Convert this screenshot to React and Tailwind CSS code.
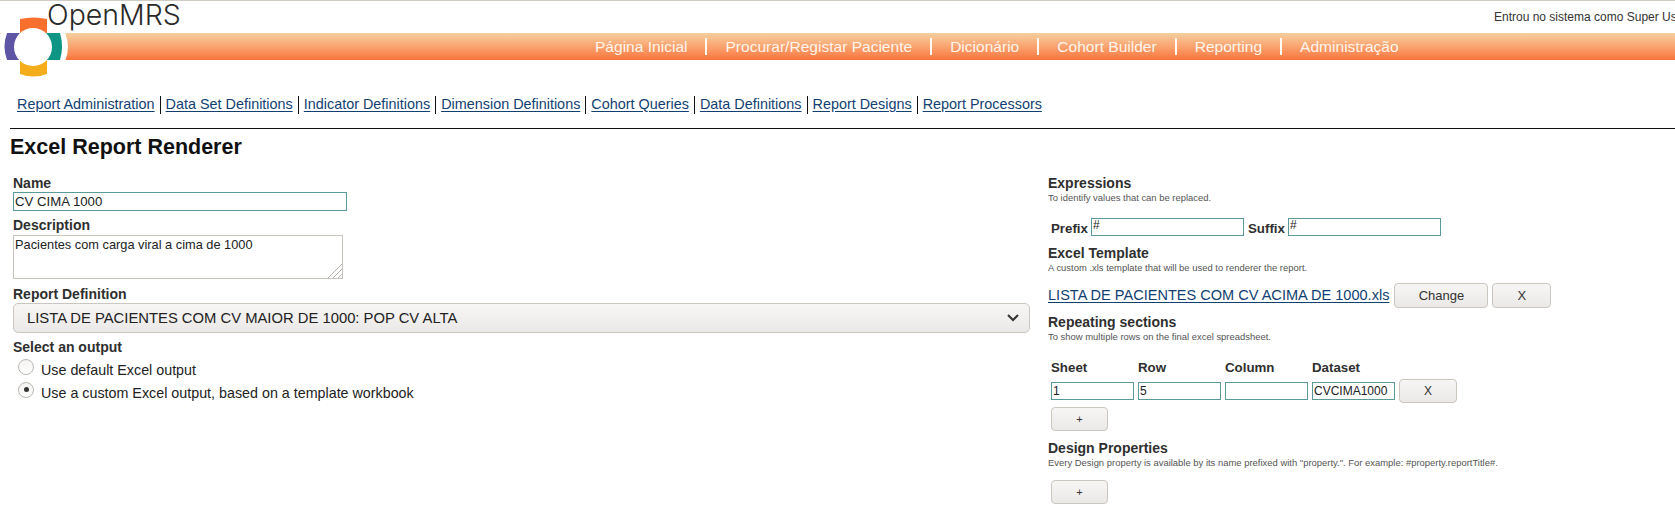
const font = "font-['Liberation_Sans',Arial,sans-serif]";

const menu = ['Página Inicial', 'Procurar/Registar Paciente', 'Dicionário', 'Cohort Builder', 'Reporting', 'Administração'];
const tabs = ['Report Administration', 'Data Set Definitions', 'Indicator Definitions', 'Dimension Definitions', 'Cohort Queries', 'Data Definitions', 'Report Designs', 'Report Processors'];

const btn = 'flex items-center justify-center rounded-[4px] border border-[#cbc6bf] bg-gradient-to-b from-[#f7f6f5] to-[#ebe9e7] text-[#333]';
const field = 'block border border-[#5a9a9a] bg-white px-[1px] text-[#222] outline-none';

const Logo = () => (
    <svg width="70" height="64" viewBox="0 0 70 64" className="absolute left-0 top-[15px]">
        <circle cx="33" cy="31" r="35" fill="#fff" />
        <path d="M20 3 Q33.5 0 47 3 V19 H20 Z" fill="#f96f2d" />
        <path d="M20 44 H47 V58 Q33.5 63 20 58 Z" fill="#f5ad1c" />
        <path d="M7 17 H22 V44 H7 Q2 30.5 7 17 Z" fill="#5f55a5" />
        <path d="M45 17 H60 Q64 30.5 60 44 H45 Z" fill="#0f9584" />
        <circle cx="33" cy="31" r="19" fill="#fff" />
    </svg>
);

const Heading = ({ children }) => <div className="text-[14px] font-bold leading-[16px] text-[#2f2f2f]">{children}</div>;
const SmallHeading = ({ children }) => <div className="text-[13.3px] font-bold leading-[16px] text-[#2f2f2f]">{children}</div>;
const Hint = ({ children }) => <div className="mt-[1px] text-[9.45px] leading-[11px] text-[#555]">{children}</div>;

const Radio = ({ checked, label }) => (
    <div className="flex h-[23px] items-center pl-[5px] text-[14.3px] text-[#222]">
        <span className="mb-[8px] flex h-[16px] w-[16px] items-center justify-center rounded-full border border-[#bdb8b1] bg-gradient-to-b from-[#f4f3f2] to-white">
            {checked && <span className="h-[5px] w-[5px] rounded-full bg-[#333]" />}
        </span>
        <span className="ml-[7px]">{label}</span>
    </div>
);

const App = () => {
    return (
        <div className={`h-[520px] w-[1675px] overflow-hidden bg-white ${font}`}>
            {/* Header */}
            <div className="relative h-[61px] border-t border-[#cfcac3]">
                <div className="mt-[32px] flex h-[27px] items-center bg-gradient-to-b from-[#f5cf9f] to-[#f9733a] pl-[595px] text-[15.55px] text-[#fff5ec]">
                    {menu.map((m, i) => (
                        <div key={m} className="flex items-center">
                            {i > 0 && <span className="mx-[18px] h-[17px] w-[2px] bg-[#fffaf2]" />}
                            <span>{m}</span>
                        </div>
                    ))}
                </div>
                <Logo />
                <div className="absolute left-[47px] top-0 font-['Inter',sans-serif] text-[28.5px] font-light leading-[28px] text-[#2a2a2a]">OpenMRS</div>
                <div className="absolute right-0 top-[9px] w-[181px] overflow-hidden whitespace-nowrap text-[12px] leading-[14px] text-[#333]">Entrou no sistema como Super User</div>
            </div>

            {/* Tabs */}
            <div className="mt-[34px] flex h-[19px] items-center pl-[17px] text-[14.4px] text-[#123f72]">
                {tabs.map((t, i) => (
                    <div key={t} className="flex items-center">
                        {i > 0 && <span className="mx-[5px] h-[18px] w-[1px] bg-[#111]" />}
                        <a className="underline underline-offset-2">{t}</a>
                    </div>
                ))}
            </div>

            <div className="ml-[10px] mt-[14px] border-t border-[#111] pt-[6px]">
                <h1 className="text-[21.5px] font-bold leading-[24px] text-[#111]">Excel Report Renderer</h1>
            </div>

            <div className="mt-[16px] flex">
                {/* Left column */}
                <div className="ml-[13px] w-[1017px] text-[14px]">
                    <Heading>Name</Heading>
                    <input readOnly value="CV CIMA 1000" className={`${field} mt-[1px] h-[19px] w-[334px] text-[13.2px]`} />
                    <div className="mt-[6px]"><Heading>Description</Heading></div>
                    <div className="relative mt-[2px] h-[44px] w-[330px]">
                        <textarea readOnly value="Pacientes com carga viral a cima de 1000" className="block h-[44px] w-[330px] resize-none border border-[#c8c3bc] px-[1px] pt-[1px] text-[12.8px] leading-[15px] text-[#222] outline-none" />
                        <svg width="14" height="14" viewBox="0 0 14 14" stroke="#b5b0a9" className="absolute bottom-[1px] right-[1px]">
                            <path d="M0 14L14 0M5 14L14 5M10 14L14 10" />
                        </svg>
                    </div>
                    <div className="mt-[7px]"><Heading>Report Definition</Heading></div>
                    <div className="mt-[1px] flex h-[30px] items-center justify-between rounded-[5px] border border-[#cbc6bf] bg-gradient-to-b from-[#f7f6f5] to-[#ebe9e7] pl-[13px] pr-[10px] text-[14.8px] text-[#222]">
                        <span>LISTA DE PACIENTES COM CV MAIOR DE 1000: POP CV ALTA</span>
                        <svg width="12" height="8" viewBox="0 0 12 8" fill="none" stroke="#333" strokeWidth="2"><path d="M1 1l5 5 5-5" /></svg>
                    </div>
                    <div className="mt-[6px]"><Heading>Select an output</Heading></div>
                    <div className="mt-[4px]">
                        <Radio label="Use default Excel output" />
                        <Radio checked label="Use a custom Excel output, based on a template workbook" />
                    </div>
                </div>

                {/* Right column */}
                <div className="ml-[18px] flex-1">
                    <Heading>Expressions</Heading>
                    <Hint>To identify values that can be replaced.</Hint>
                    <div className="mt-[13px] flex items-center pl-[3px]">
                        <span className="w-[40px] pt-[5px]"><SmallHeading>Prefix</SmallHeading></span>
                        <input readOnly value="#" className={`${field} h-[18px] w-[153px] pb-[3px] text-[12px]`} />
                        <span className="ml-[4px] w-[40px] pt-[5px]"><SmallHeading>Suffix</SmallHeading></span>
                        <input readOnly value="#" className={`${field} h-[18px] w-[153px] pb-[3px] text-[12px]`} />
                    </div>
                    <div className="mt-[8px]"><Heading>Excel Template</Heading></div>
                    <Hint>A custom .xls template that will be used to renderer the report.</Hint>
                    <div className="mt-[10px] flex items-center text-[14.55px]">
                        <a className="text-[#123f72] underline underline-offset-2">LISTA DE PACIENTES COM CV ACIMA DE 1000.xls</a>
                        <div className={`${btn} ml-[5px] h-[25px] w-[94px] text-[13px]`}>Change</div>
                        <div className={`${btn} ml-[4px] h-[25px] w-[59px] text-[13px]`}>X</div>
                    </div>
                    <div className="mt-[6px]"><Heading>Repeating sections</Heading></div>
                    <Hint>To show multiple rows on the final excel spreadsheet.</Hint>
                    <div className="mt-[18px] grid w-[348px] grid-cols-[83px_83px_83px_83px] gap-x-[4px] pl-[3px]">
                        {['Sheet', 'Row', 'Column', 'Dataset'].map((h) => (
                            <SmallHeading key={h}>{h}</SmallHeading>
                        ))}
                    </div>
                    <div className="mt-[3px] flex items-center gap-x-[4px] pl-[3px]">
                        {['1', '5', '', 'CVCIMA1000'].map((v, i) => (
                            <input key={i} readOnly value={v} className={`${field} h-[18px] w-[83px] text-[12px]`} />
                        ))}
                        <div className={`${btn} h-[24px] w-[58px] text-[12px]`}>X</div>
                    </div>
                    <div className={`${btn} ml-[3px] mt-[4px] h-[24px] w-[57px] text-[11px]`}>+</div>
                    <div className="mt-[9px]"><Heading>Design Properties</Heading></div>
                    <Hint>Every Design property is available by its name prefixed with "property.". For example: #property.reportTitle#.</Hint>
                    <div className={`${btn} ml-[3px] mt-[12px] h-[24px] w-[57px] text-[11px]`}>+</div>
                </div>
            </div>
        </div>
    );
};

export default App;
